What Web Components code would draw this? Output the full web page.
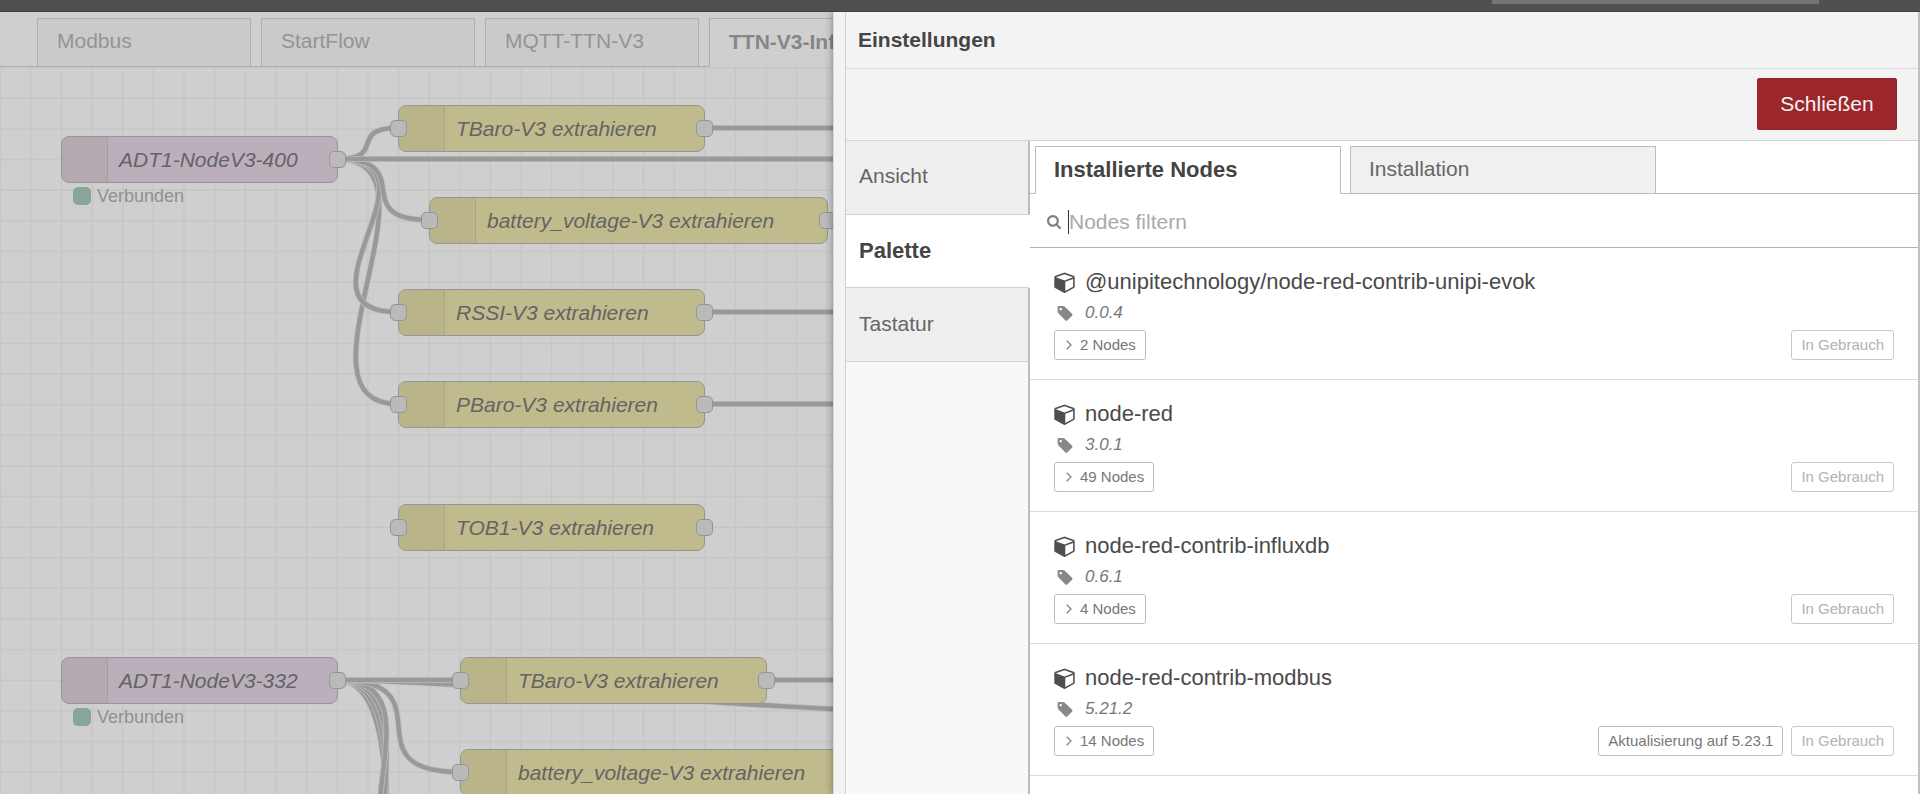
<!DOCTYPE html>
<html lang="de">
<head>
<meta charset="utf-8">
<meta name="viewport" content="width=device-width, initial-scale=1">
<title>Node-RED – Einstellungen</title>
<style>
  body { margin: 0; font: 21px/30px "Liberation Sans", Arial, sans-serif; color: #4a4a4a; }
</style>
</head>
<body>
<app-shell>
  <flow-tabs slot="workspace">
    <flow-tab>Modbus</flow-tab>
    <flow-tab>StartFlow</flow-tab>
    <flow-tab>MQTT-TTN-V3</flow-tab>
    <flow-tab active>TTN-V3-Influx</flow-tab>
  </flow-tabs>
  <flow-canvas slot="workspace">
    <flow-node kind="mqtt" x="61" y="69" w="277" out status="Verbunden">ADT1-NodeV3-400</flow-node>
    <flow-node x="398" y="38" w="307" in out>TBaro-V3 extrahieren</flow-node>
    <flow-node x="429" y="130" w="399" in out>battery_voltage-V3 extrahieren</flow-node>
    <flow-node x="398" y="222" w="307" in out>RSSI-V3 extrahieren</flow-node>
    <flow-node x="398" y="314" w="307" in out>PBaro-V3 extrahieren</flow-node>
    <flow-node x="398" y="437" w="307" in out>TOB1-V3 extrahieren</flow-node>
    <flow-node kind="mqtt" x="61" y="590" w="277" out status="Verbunden">ADT1-NodeV3-332</flow-node>
    <flow-node x="460" y="590" w="307" in out>TBaro-V3 extrahieren</flow-node>
    <flow-node x="460" y="682" w="399" in out>battery_voltage-V3 extrahieren</flow-node>
  </flow-canvas>
  <settings-tray slot="tray" heading="Einstellungen">
    <settings-nav slot="nav"></settings-nav>
    <palette-tabs></palette-tabs>
    <palette-search></palette-search>
    <palette-module name="@unipitechnology/node-red-contrib-unipi-evok" version="0.0.4" nodes="2"></palette-module>
    <palette-module name="node-red" version="3.0.1" nodes="49"></palette-module>
    <palette-module name="node-red-contrib-influxdb" version="0.6.1" nodes="4"></palette-module>
    <palette-module name="node-red-contrib-modbus" version="5.21.2" nodes="14" update="5.23.1"></palette-module>
  </settings-tray>
</app-shell>

<script>
const define = (name, render, after) => customElements.define(name, class extends HTMLElement {
  constructor() { super(); this.attachShadow({ mode: 'open' }); }
  connectedCallback() {
    this.shadowRoot.innerHTML = '<style>:host,*{box-sizing:border-box}button,input{font:inherit;color:inherit;margin:0}</style>' + render(this);
    if (after) after(this);
  }
});

define('app-shell', () => `
  <style>
    :host { display: flex; flex-direction: column; height: 100vh; overflow: hidden; background: #cfcfcf; }
    header { flex: none; display: flex; justify-content: flex-end; height: 12px; padding-right: 101px; background: #505050; border-bottom: 1px solid #3f3f3f; }
    .menu { width: 327px; height: 4px; background: #757575; }
    main { flex: 1; min-height: 0; display: grid; grid-template-columns: minmax(0, 833fr) minmax(0, 1087fr); }
    .workspace { display: flex; flex-direction: column; overflow: hidden; min-height: 0; }
    .tray { min-height: 0; display: flex; position: relative; box-shadow: 0 0 8px rgba(0,0,0,.4); clip-path: inset(0 0 0 -12px); }
  </style>
  <header><div class="menu"></div></header>
  <main>
    <div class="workspace"><slot name="workspace"></slot></div>
    <div class="tray"><slot name="tray"></slot></div>
  </main>`);

define('flow-tabs', () => `
  <style>
    :host { flex: none; display: flex; gap: 10px; height: 55px; padding: 6px 0 0 37px; background: linear-gradient(#aeaeae, #aeaeae) bottom / 100% 1px no-repeat #cfcfcf; }
  </style><slot></slot>`);

define('flow-tab', () => `
  <style>
    :host { display: block; flex: 0 0 214px; height: 49px; padding: 7px 18px 0 19px; white-space: nowrap; overflow: hidden;
            background: #cacaca; border: 1px solid #aeaeae; color: #949494; }
    :host([active]) { background: #cfcfcf; border-bottom-color: #cfcfcf; color: #868686; font-weight: bold; padding-top: 8px; }
  </style><slot></slot>`);

/* Wire geometry: short hops bend less, longer ones reach 115px past each port. */
const NODE_WIDTH = 153;
const wire = (x1, y1, x2, y2) => {
  const delta = Math.hypot(x2 - x1, y2 - y1);
  const reach = 0.75 * Math.min(1, delta / NODE_WIDTH) * NODE_WIDTH;
  return `M${x1} ${y1}C${x1 + reach} ${y1} ${x2 - reach} ${y2} ${x2} ${y2}`;
};
const WIRES = [
  [337, 92, 398, 337], [337, 92, 398, 245], [337, 92, 429, 153], [337, 92, 398, 61], [337, 92, 1100, 92],
  [705, 61, 1000, 61], [705, 245, 1000, 245], [705, 337, 1000, 337],
  [337, 613, 429, 1140], [337, 613, 429, 1012], [337, 613, 429, 889], [337, 613, 429, 797],
  [337, 613, 460, 705], [337, 613, 900, 644], [337, 613, 460, 613], [767, 613, 1000, 613],
];

define('flow-canvas', () => `
  <style>
    :host { display: block; flex: 1; position: relative; overflow: hidden; background: #cfcfcf; }
    svg { display: block; width: 100%; height: 100%; }
    .under { fill: none; stroke: #bdbdbd; stroke-width: 6; }
    .wire { fill: none; stroke: #999; stroke-width: 4.4; }
  </style>
  <svg aria-hidden="true">
    <defs>
      <pattern id="grid" width="30.63" height="30.63" patternUnits="userSpaceOnUse" patternTransform="translate(-15 -14.3)">
        <path d="M15.300 0V30.630M0 15H30.630" stroke="#c5c5c5" stroke-width="1.4" fill="none"/>
      </pattern>
    </defs>
    <rect width="100%" height="100%" fill="url(#grid)"/>
    ${WIRES.map(w => `<path class="under" d="${wire(...w)}"/><path class="wire" d="${wire(...w)}"/>`).join('')}
  </svg>
  <slot></slot>`);

define('flow-node', el => `
  <style>
    :host { position: absolute; display: block; --body: #c0bb8c; --edge: #bab48a; }
    :host([kind="mqtt"]) { --body: #baafbb; --edge: #b4a9b1; }
    .body { display: flex; align-items: center; height: 47px; border: 1px solid #959595; border-radius: 8px; background: var(--body); overflow: hidden; }
    .icon { flex: none; width: 46px; height: 100%; background: var(--edge); border-right: 1px solid #a9a48a; }
    :host([kind="mqtt"]) .icon { border-color: #a59ca5; }
    .label { padding-left: 11px; font-style: italic; color: #646464; white-space: nowrap; }
    .port { position: absolute; top: 15px; width: 17px; height: 17px; border: 1px solid #959595; border-radius: 5px; background: #bababa; }
    .in { left: -8px; } .out { right: -8px; }
    .status { display: flex; align-items: center; gap: 6px; padding: 2px 0 0 12px; font-size: 18px; line-height: 22px; color: #8f8f8f; }
    .dot { width: 18px; height: 18px; border-radius: 5px; background: #87a697; }
  </style>
  <div class="body"><span class="icon"></span><span class="label"><slot></slot></span></div>
  ${el.hasAttribute('in') ? '<span class="port in"></span>' : ''}
  ${el.hasAttribute('out') ? '<span class="port out"></span>' : ''}
  ${el.hasAttribute('status') ? `<div class="status"><span class="dot"></span>${el.getAttribute('status')}</div>` : ''}`,
  el => {
    el.style.left = el.getAttribute('x') + 'px';
    el.style.top = el.getAttribute('y') + 'px';
    el.style.width = el.getAttribute('w') + 'px';
  });

define('settings-tray', el => `
  <style>
    :host { flex: 1; min-width: 0; display: flex; background: #f3f3f3; border-left: 1px solid #d8d8d8; }
    .handle { flex: none; width: 12px; border-right: 1px solid #cfcfcf; }
    .panel { flex: 1; min-width: 0; display: flex; flex-direction: column; border-right: 2px solid #c0c0c0; }
    h1 { margin: 0; height: 57px; padding: 13px 12px 0; font-size: 21px; line-height: 30px; color: #444; border-bottom: 1px solid #d9d9d9; }
    .toolbar { display: flex; justify-content: flex-end; height: 72px; padding: 9px 21px 0; border-bottom: 1px solid #d4d4d4; }
    .toolbar button { width: 140px; height: 52px; border: 1px solid #94242a; border-radius: 2px; background: #9c272b; color: #f3f3f3; padding: 0; }
    .content { flex: 1; min-height: 0; display: flex; background: #f8f8f8; }
    .body { flex: 1; min-width: 0; background: #fff; overflow: hidden; }
  </style>
  <div class="handle"></div>
  <section class="panel">
    <h1>${el.getAttribute('heading')}</h1>
    <div class="toolbar"><button type="button">Schließen</button></div>
    <div class="content"><slot name="nav"></slot><div class="body"><slot></slot></div></div>
  </section>`);

define('settings-nav', () => `
  <style>
    :host { flex: none; display: flex; flex-direction: column; width: 184px; }
    nav { display: grid; grid-template-rows: repeat(3, 1fr); height: 221px; }
    a { display: flex; align-items: center; padding: 0 13px 2px; border-bottom: 1px solid #d2d2d2; border-right: 2px solid #bcbcbc; background: #efefef; color: #666; text-decoration: none; }
    a[aria-current] { background: #fff; border-right-color: #fff; color: #444; font-size: 22px; font-weight: bold; padding-bottom: 0; }
    .rest { flex: 1; border-right: 2px solid #bcbcbc; }
  </style>
  <nav><a href="#view">Ansicht</a><a href="#palette" aria-current="page">Palette</a><a href="#keyboard">Tastatur</a></nav>
  <div class="rest"></div>`);

define('palette-tabs', () => `
  <style>
    :host { display: flex; gap: 9px; height: 53px; padding: 5px 5px 0; background: linear-gradient(#bcbcbc, #bcbcbc) bottom / 100% 1px no-repeat #fff; }
    a { flex: 0 1 306px; height: 48px; padding: 7px 18px 0; border: 1px solid #bcbcbc; background: #f0f0f0; color: #666; text-decoration: none; }
    a[aria-current] { background: #fff; border-bottom-color: #fff; color: #444; font-size: 22px; font-weight: bold; padding-top: 8px; }
  </style>
  <a href="#installed" aria-current="true">Installierte Nodes</a><a href="#install">Installation</a>`);

define('palette-search', () => `
  <style>
    :host { display: flex; align-items: center; height: 54px; padding: 2px 0 0 17px; border-bottom: 1px solid #b4b4b4; }
    label { display: flex; width: 14px; margin-right: 7px; }
    svg { width: 14px; height: 14px; fill: #808080; }
    .caret { width: 1px; height: 24px; background: #333; }
    input { flex: 1; min-width: 0; height: 30px; padding: 0; border: 0; outline: 0; background: none; }
    input::placeholder { color: #aaa; opacity: 1; }
  </style>
  <label for="q" aria-label="Nodes filtern"><svg viewBox="64 128 1664 1664"><path d="M1216 832q0-185-131.500-316.500t-316.500-131.500-316.500 131.500-131.500 316.500 131.500 316.500 316.500 131.500 316.500-131.500 131.500-316.500zm512 832q0 52-38 90t-90 38q-54 0-90-38l-343-342q-179 124-399 124-143 0-273.500-55.500t-225-150-150-225-55.500-273.500 55.500-273.500 150-225 225-150 273.500-55.500 273.500 55.500 225 150 150 225 55.500 273.500q0 220-124 399l343 343q37 37 37 90z"/></svg></label>
  <span class="caret"></span>
  <input id="q" type="text" placeholder="Nodes filtern">`);

define('palette-module', el => `
  <style>
    :host { display: block; height: 132px; padding: 19px 24px 0; border-bottom: 1px solid #dadada; }
    .line { display: flex; align-items: center; height: 30px; gap: 10px; }
    .line svg { flex: none; width: 21px; height: 22px; fill: #4f4f4f; }
    .name { font-size: 22px; }
    .version { margin-top: 1px; font-size: 17px; font-style: italic; color: #777; }
    .line.version svg { height: 15px; fill: #888; }
    .actions { display: flex; gap: 8px; margin-top: 2px; font-size: 15px; line-height: 20px; }
    button { height: 30px; padding: 0 9px; border: 1px solid #bdbdbd; border-radius: 3px; background: #fff; color: #777; white-space: nowrap; }
    .nodes { display: flex; align-items: center; gap: 8px; margin-right: auto; padding-left: 11px; }
    .nodes svg { width: 6px; height: 10px; fill: none; stroke: #888; stroke-width: 1.3; }
    button:disabled { color: #b3b3b3; border-color: #c8c8c8; }
  </style>
  <div class="line name"><svg viewBox="0 0 1664 1792"><path d="M896 1629l640-349v-636l-640 233v752zm-64-865l698-254-698-254-698 254 698 254zm832-252v768q0 35-18 65t-49 47l-704 384q-28 16-61 16t-61-16l-704-384q-31-17-49-47t-18-65v-768q0-40 23-73t61-50l704-256q22-8 44-8t44 8l704 256q38 17 61 50t23 73z"/></svg><span>${el.getAttribute('name')}</span></div>
  <div class="line version"><svg viewBox="0 128 1664 1536"><path d="M576 448q0-53-37.500-90.500t-90.500-37.500-90.500 37.500-37.500 90.500 37.500 90.500 90.500 37.500 90.500-37.500 37.500-90.500zm1067 576q0 53-37 90l-491 492q-39 37-91 37-53 0-90-37l-715-716q-38-37-64.500-101t-26.500-117v-416q0-52 38-90t90-38h416q53 0 117 26.500t102 64.500l715 714q37 39 37 91z"/></svg><span>${el.getAttribute('version')}</span></div>
  <div class="actions">
    <button type="button" class="nodes"><svg viewBox="0 0 6 10"><path d="M0.700 0.800L5 5L0.700 9.200"/></svg>${el.getAttribute('nodes')} Nodes</button>
    ${el.hasAttribute('update') ? `<button type="button">Aktualisierung auf ${el.getAttribute('update')}</button>` : ''}
    <button type="button" disabled>In Gebrauch</button>
  </div>`);
</script>
</body>
</html>
